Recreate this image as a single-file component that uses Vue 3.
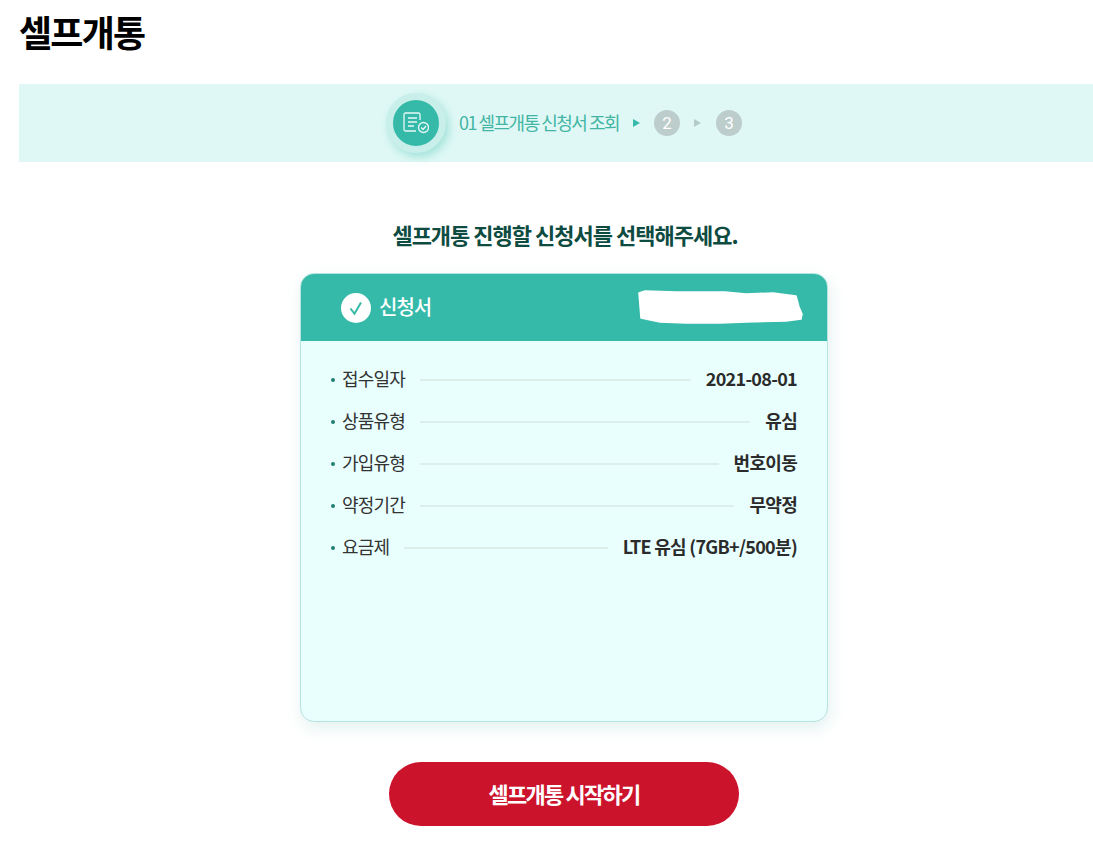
<template>
  <div class="page">
    <h1 class="title">셀프개통</h1>

    <div class="steps">
      <div class="step-icon">
        <svg width="26" height="22" viewBox="0 0 26 22" fill="none" stroke="#e6f8f5" stroke-width="1.3">
          <path d="M17 8V2.500A1.500 1.500 0 0 0 15.500 1H2.500A1.500 1.500 0 0 0 1 2.500V17.500A1.500 1.500 0 0 0 2.500 19H13" />
          <path d="M5 6H14M5 10H14M5 14H11" />
          <circle cx="20.500" cy="15.500" r="5" />
          <path d="M18.200 15.500L20 17.400L23 14" stroke-width="1.500" />
        </svg>
      </div>
      <span class="step-label">01 셀프개통 신청서 조회</span>
      <span class="arrow on"></span>
      <span class="num">2</span>
      <span class="arrow last"></span>
      <span class="num">3</span>
    </div>

    <h2 class="lead">셀프개통 진행할 신청서를 선택해주세요.</h2>

    <div class="card">
      <div class="card-head">
        <div class="card-name">
          <svg class="check" width="30" height="30" viewBox="0 0 30 30">
            <circle cx="15" cy="15" r="15" fill="#fff" />
            <path d="M9.500 15.500L13.500 20.800L20 9.500" fill="none" stroke="#35baa9" stroke-width="2" />
          </svg>
          <span class="card-title">신청서</span>
        </div>
        <svg class="redacted" width="165" height="35" viewBox="0 0 165 35">
          <path
            fill="#fff"
            stroke="#fff"
            stroke-width="1.500"
            stroke-linejoin="round"
            d="M1 3L7 1L38 2L87 2L108 4L135 3L158 6L161 17L164 24L163 29L148 31L108 32L82 33L48 33L22 32L3 28L2 16Z"
          />
        </svg>
      </div>
      <ul class="rows">
        <li v-for="row in rows" :key="row.label" class="row">
          <span class="dot"></span>
          <span class="label">{{ row.label }}</span>
          <span class="line"></span>
          <span class="value">{{ row.value }}</span>
        </li>
      </ul>
    </div>

    <button class="start" type="button"><span>셀프개통 시작하기</span></button>
  </div>
</template>

<script setup>
const rows = [
  { label: '접수일자', value: '2021-08-01' },
  { label: '상품유형', value: '유심' },
  { label: '가입유형', value: '번호이동' },
  { label: '약정기간', value: '무약정' },
  { label: '요금제', value: 'LTE 유심 (7GB+/500분)' }
]
</script>

<style>
html, body {
  background: #fff;
}
</style>

<style scoped>
.page {
  width: 1093px;
  height: 862px;
  box-sizing: border-box;
  padding: 12px 0 0 19px;
  display: flex;
  flex-direction: column;
  overflow: hidden;
  font-family: "Noto Sans CJK KR", "Noto Sans", sans-serif;
}

.title {
  margin: 0;
  height: 72px;
  font-size: 36px;
  line-height: 38px;
  font-weight: 700;
  letter-spacing: -1.8px;
  color: #000;
}

.steps {
  height: 78px;
  background: #dff8f5;
  display: flex;
  align-items: center;
  justify-content: center;
  padding-left: 16px;
}

.step-icon {
  width: 46px;
  height: 46px;
  border-radius: 50%;
  background: #35baa9;
  border: 7px solid #c8efe9;
  box-shadow: 3px 4px 8px rgba(53, 186, 169, 0.35);
  display: flex;
  align-items: center;
  justify-content: center;
}

.step-label {
  margin-left: 13px;
  padding-bottom: 3px;
  font-size: 18px;
  letter-spacing: -1.5px;
  color: #43b5a4;
}

.arrow {
  margin: 0 14px;
  width: 0;
  height: 0;
  border-left: 7px solid #b5cbc8;
  border-top: 4px solid transparent;
  border-bottom: 4px solid transparent;
}

.arrow.on {
  border-left-color: #35baa9;
}

.arrow.last {
  margin-right: 15px;
}

.num {
  width: 26px;
  height: 26px;
  border-radius: 50%;
  background: #bccdcb;
  color: #fff;
  font-size: 17px;
  line-height: 26px;
  text-align: center;
  font-family: Roboto, sans-serif;
}

.lead {
  margin: 57px 0 0;
  height: 32px;
  padding-left: 18px;
  text-align: center;
  font-size: 22px;
  line-height: 30px;
  font-weight: 700;
  letter-spacing: -1px;
  color: #0e4b41;
}

.card {
  margin: 22px 0 0 281px;
  width: 528px;
  height: 449px;
  box-sizing: border-box;
  border: 1px solid #b5e3df;
  border-radius: 14px;
  background: #e9fffd;
  box-shadow: 2px 6px 16px rgba(80, 170, 160, 0.16);
  overflow: hidden;
}

.card-head {
  height: 67px;
  background: #35baa9;
  display: flex;
  align-items: center;
  justify-content: space-between;
  padding: 0 24px 0 40px;
}

.card-name {
  display: flex;
  align-items: center;
  gap: 8px;
  font-size: 20px;
  font-weight: 500;
  letter-spacing: -1px;
  color: #fff;
}

.card-title {
  padding-bottom: 2px;
}

.rows {
  list-style: none;
  margin: 0;
  padding: 18px 30px 0 30px;
}

.row {
  height: 42px;
  display: flex;
  align-items: center;
  font-size: 18px;
  letter-spacing: -0.8px;
  color: #333;
}

.dot {
  width: 4px;
  height: 4px;
  border-radius: 50%;
  background: #1f7f71;
  margin: 0 7px 0 0;
}

.label,
.value {
  padding-bottom: 4px;
}

.line {
  flex: 1;
  height: 2px;
  background: #dcefeb;
  margin: 0 15px;
}

.value {
  font-weight: 700;
  letter-spacing: -0.7px;
  color: #2b2b2b;
}

.start {
  margin: 40px 0 0 370px;
  width: 350px;
  height: 64px;
  flex-shrink: 0;
  border: 0;
  border-radius: 32px;
  background: #cc132c;
  color: #fff;
  font-family: inherit;
  font-size: 22px;
  font-weight: 700;
  letter-spacing: -1.75px;
}

.start span {
  display: block;
  padding-bottom: 2px;
}
</style>
